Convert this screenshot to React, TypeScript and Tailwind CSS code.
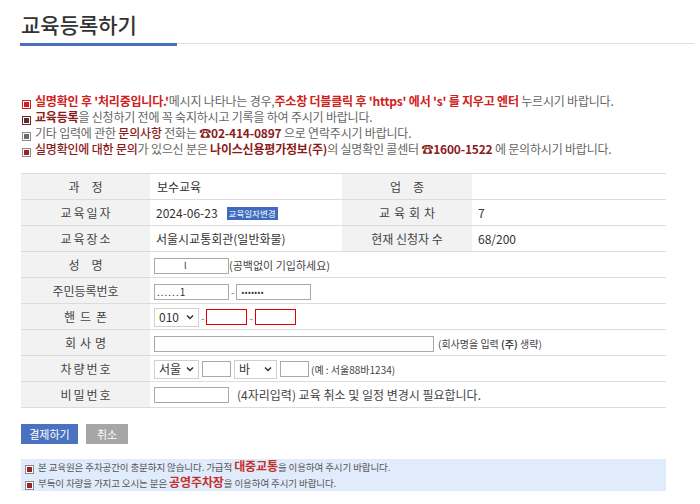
import React from 'react';

const FONT = "font-['Noto_Sans_CJK_KR','Noto_Sans',sans-serif]";

const Bullet: React.FC<{ tone: 'red' | 'dark' | 'gray' | 'mixed' }> = ({ tone }) => {
  const outer =
    tone === 'red' ? 'border-[#d0201b]' : tone === 'dark' ? 'border-[#6b2a2a]' : 'border-[#8a8a8a]';
  const inner =
    tone === 'red' ? 'bg-[#d0201b]' : tone === 'dark' ? 'bg-[#6b2a2a]' : tone === 'mixed' ? 'bg-[#9b2323]' : 'bg-[#6a6a6a]';
  return (
    <span className={`inline-flex items-center justify-center w-[9px] h-[9px] border ${outer} bg-white mr-[4px] align-[-1px]`}>
      <span className={`w-[5px] h-[5px] ${inner}`} />
    </span>
  );
};

// label cell, characters spread with a gap
const Label: React.FC<{ text: string[]; gap?: string }> = ({ text, gap = 'gap-0' }) => (
  <td className="bg-[#f2f2f2] text-center text-[12px] text-[#444] border-b border-[#dcdcdc] h-[26px]">
    <span className={`inline-flex ${gap}`}>
      {text.map((t, i) => (
        <span key={i}>{t}</span>
      ))}
    </span>
  </td>
);

const Value: React.FC<{ children?: React.ReactNode; span?: number }> = ({ children, span }) => (
  <td colSpan={span} className="bg-white text-[12px] text-[#333] border-b border-[#dcdcdc] pl-[4px] h-[26px] whitespace-nowrap">
    {children}
  </td>
);

const Box: React.FC<{ w: string; red?: boolean; children?: React.ReactNode }> = ({ w, red, children }) => (
  <span
    className={`inline-flex items-center h-[16px] ${w} border ${red ? 'border-[#e00000]' : 'border-[#a9a9a9]'} bg-white text-[11px] text-[#333] px-[2px] align-middle`}
  >
    {children}
  </span>
);

const Select: React.FC<{ w: string; value: string }> = ({ w, value }) => (
  <span className={`inline-flex items-center justify-between h-[19px] ${w} border border-[#d0d0d0] bg-white text-[12px] text-[#333] px-[4px] align-middle`}>
    <span>{value}</span>
    <svg width="8" height="6" viewBox="0 0 8 6">
      <path d="M1 1.5 L4 4.5 L7 1.5" fill="none" stroke="#333" strokeWidth="1.5" />
    </svg>
  </span>
);

const Dash = () => <span className="text-[10px] text-[#777] mx-[2px] align-middle">-</span>;

export default function App() {
  return (
    <div className={`w-[700px] h-[504px] bg-white overflow-hidden ${FONT}`}>
      <h1 className="pl-[21px] pt-[9px] text-[21px] leading-[30px] font-medium text-[#333]">교육등록하기</h1>
      <div className="flex items-start mt-[4px] ml-[20px] mr-[6px]">
        <div className="w-[157px] h-[3px] bg-[#4a6fbf]" />
        <div className="flex-1 h-px bg-[#dedede]" />
      </div>

      <div className="pl-[22px] mt-[47px] text-[12px] leading-[16px] text-[#666] tracking-[-0.2px]">
        <p>
          <Bullet tone="red" />
          <b className="text-[#d0201b] font-bold">실명확인 후 '처리중입니다.'</b>메시지 나타나는 경우,
          <b className="text-[#d0201b] font-bold">주소창 더블클릭 후 'https' 에서 's' 를 지우고 엔터</b> 누르시기 바랍니다.
        </p>
        <p>
          <Bullet tone="dark" />
          <b className="text-[#8b1c1c] font-bold">교육등록</b>을 신청하기 전에 꼭 숙지하시고 기록을 하여 주시기 바랍니다.
        </p>
        <p>
          <Bullet tone="gray" />
          기타 입력에 관한 <span className="text-[#8b1c1c] font-medium">문의사항</span> 전화는{' '}
          <b className="text-[#8b1c1c] font-bold">☎02-414-0897</b> 으로 연락주시기 바랍니다.
        </p>
        <p>
          <Bullet tone="mixed" />
          <span className="text-[#8b1c1c] font-medium">실명확인에 대한 문의</span>가 있으신 분은{' '}
          <b className="text-[#8b1c1c] font-bold">나이스신용평가정보(주)</b>의 실명확인 콜센터{' '}
          <b className="text-[#8b1c1c] font-bold">☎1600-1522</b> 에 문의하시기 바랍니다.
        </p>
      </div>

      <div className="pl-[21px] pr-[34px] mt-[16px]">
        <table className="w-full border-collapse border-t border-[#dcdcdc] table-fixed">
          <colgroup>
            <col className="w-[129px]" />
            <col className="w-[192px]" />
            <col className="w-[130px]" />
            <col />
          </colgroup>
          <tbody>
            <tr>
              <Label text={['과', '정']} gap="gap-[12px]" />
              <Value>
                <span className="pl-[3px]">보수교육</span>
              </Value>
              <Label text={['업', '종']} gap="gap-[12px]" />
              <Value />
            </tr>
            <tr>
              <Label text={['교', '육', '일', '자']} gap="gap-[2px]" />
              <Value>
                <span className="pl-[2px]">2024-06-23</span>
                <span className="ml-[9px] inline-block bg-[#3f6bbf] text-white text-[8.5px] leading-[13px] px-[2px] align-[1px]">교육일자변경</span>
              </Value>
              <Label text={['교', '육', '회', '차']} gap="gap-[4px]" />
              <Value>
                <span className="pl-[2px]">7</span>
              </Value>
            </tr>
            <tr>
              <Label text={['교', '육', '장', '소']} gap="gap-[2px]" />
              <Value>
                <span className="pl-[2px]">서울시교통회관(일반화물)</span>
              </Value>
              <td className="bg-[#f2f2f2] text-center text-[12px] text-[#444] border-b border-[#dcdcdc] h-[26px]">현재 신청자 수</td>
              <Value>
                <span className="pl-[2px]">68/200</span>
              </Value>
            </tr>
            <tr>
              <Label text={['성', '명']} gap="gap-[12px]" />
              <Value span={3}>
                <Box w="w-[75px]">
                  <span className="ml-[27px] text-[9px]">l</span>
                </Box>
                <span className="text-[11px] text-[#444] align-middle">(공백없이 기입하세요)</span>
              </Value>
            </tr>
            <tr>
              <Label text={['주민등록번호']} />
              <Value span={3}>
                <Box w="w-[75px]">
                  <span className="text-[10px] tracking-[1px]">......1</span>
                </Box>
                <Dash />
                <Box w="w-[75px]">
                  <span className="text-[8px] ml-[2px] tracking-[0.5px]">•••••••</span>
                </Box>
              </Value>
            </tr>
            <tr>
              <Label text={['핸', '드', '폰']} gap="gap-[5px]" />
              <Value span={3}>
                <Select w="w-[45px]" value="010" />
                <Dash />
                <Box w="w-[41px]" red />
                <Dash />
                <Box w="w-[41px]" red />
              </Value>
            </tr>
            <tr>
              <Label text={['회', '사', '명']} gap="gap-[4px]" />
              <Value span={3}>
                <Box w="w-[280px]" />
                <span className="ml-[4px] text-[10px] text-[#444] align-middle">
                  (회사명을 입력 <b>(주)</b> 생략)
                </span>
              </Value>
            </tr>
            <tr>
              <Label text={['차', '량', '번', '호']} gap="gap-[2px]" />
              <Value span={3}>
                <Select w="w-[45px]" value="서울" />
                <span className="inline-block w-[3px]" />
                <Box w="w-[29px]" />
                <span className="inline-block w-[3px]" />
                <Select w="w-[43px]" value="바" />
                <span className="inline-block w-[3px]" />
                <Box w="w-[29px]" />
                <span className="ml-[2px] text-[10px] text-[#444] align-middle">(예 : 서울88바1234)</span>
              </Value>
            </tr>
            <tr>
              <Label text={['비', '밀', '번', '호']} gap="gap-[2px]" />
              <Value span={3}>
                <Box w="w-[75px]" />
                <span className="ml-[8px] text-[12px] text-[#444] align-middle">(4자리입력) 교육 취소 및 일정 변경시 필요합니다.</span>
              </Value>
            </tr>
          </tbody>
        </table>

        <div className="flex gap-[8px] mt-[16px]">
          <button className="w-[57px] h-[20px] bg-[#4a72c0] text-white text-[11px] leading-[20px]">결제하기</button>
          <button className="w-[42px] h-[20px] bg-[#a6a6a6] text-white text-[11px] leading-[20px]">취소</button>
        </div>

        <div className="mt-[15px] h-[32px] bg-[#e0ebfb] pl-[4px] text-[9.5px] leading-[16px] text-[#555] tracking-[-0.1px]">
          <p className="h-[16px]">
            <Bullet tone="mixed" />본 교육원은 주차공간이 충분하지 않습니다. 가급적{' '}
            <b className="text-[12px] leading-none text-[#c4302b] font-bold">대중교통</b>을 이용하여 주시기 바랍니다.
          </p>
          <p className="h-[16px]">
            <Bullet tone="mixed" />부득이 차량을 가지고 오시는 분은{' '}
            <b className="text-[12px] leading-none text-[#c4302b] font-bold">공영주차장</b>을 이용하여 주시기 바랍니다.
          </p>
        </div>
      </div>
    </div>
  );
}
